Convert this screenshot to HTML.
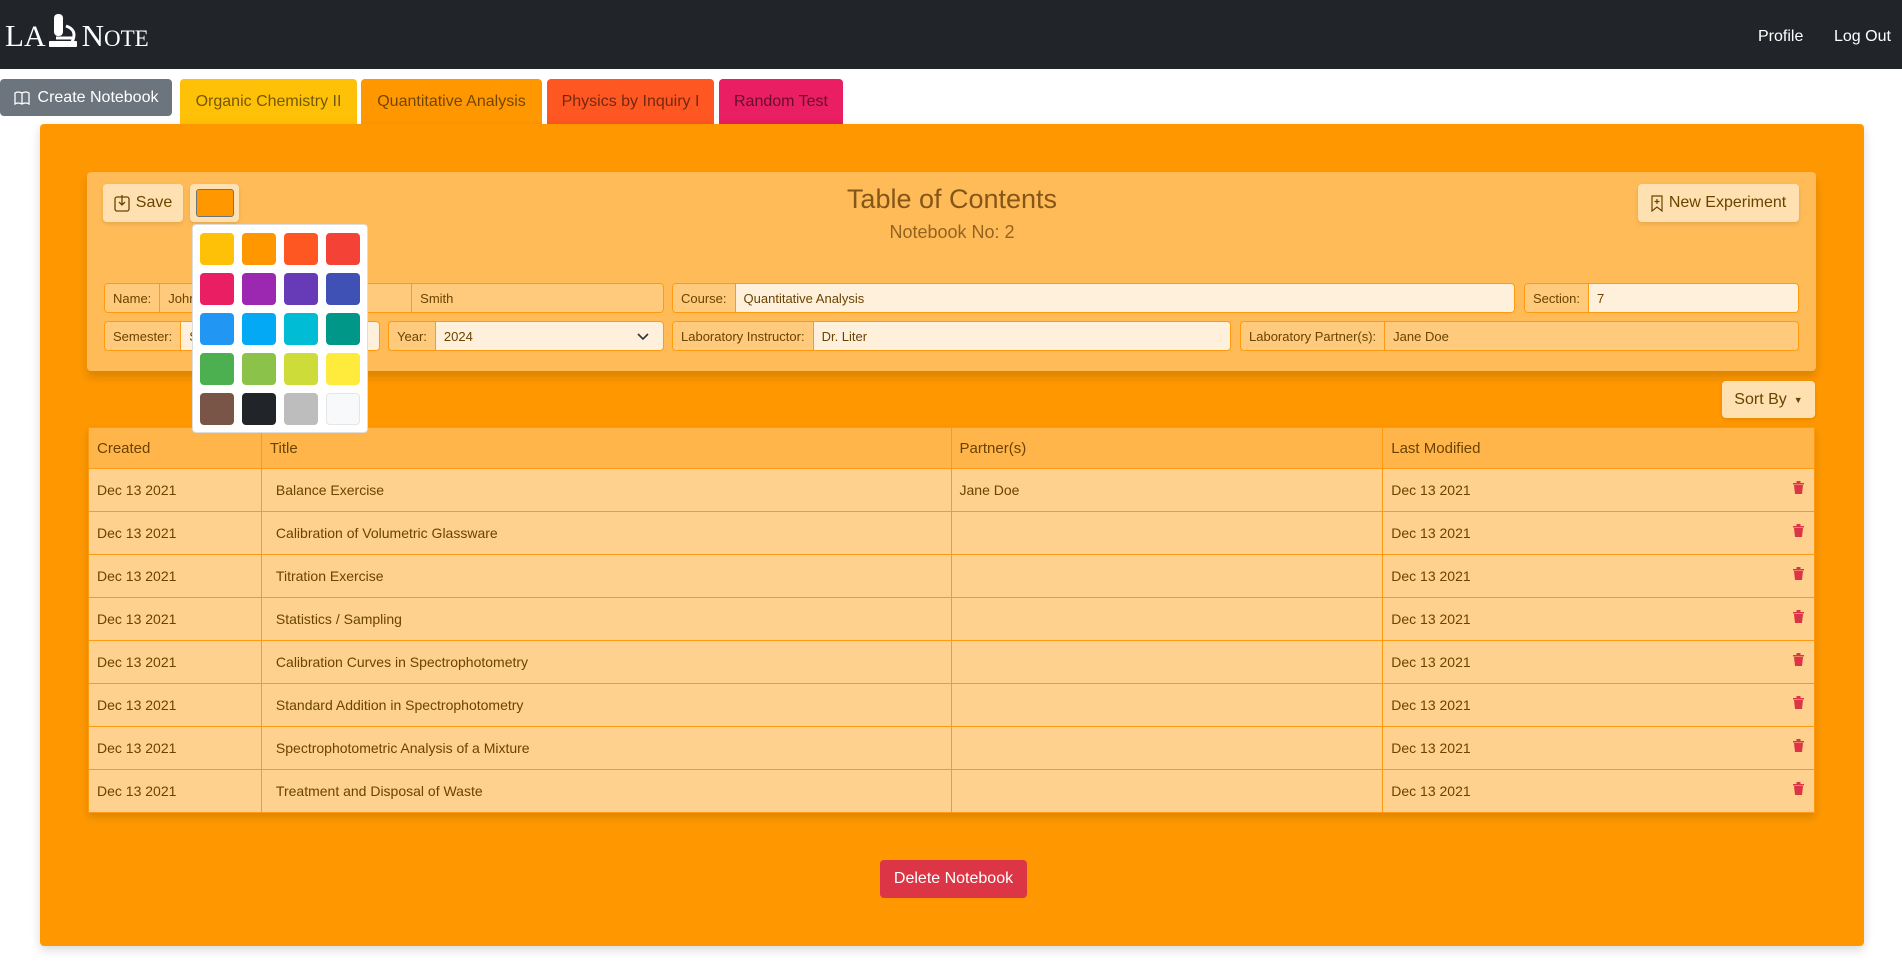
<!DOCTYPE html>
<html><head><meta charset="utf-8">
<style>
*{box-sizing:border-box;margin:0;padding:0}
body{width:1902px;height:965px;overflow:hidden;background:#fff;font-family:"Liberation Sans",sans-serif;position:relative}
.abs{position:absolute}
.nav{left:0;top:0;width:1902px;height:69px;background:#212529}
.logo{left:5px;top:14px;color:#fff;font-family:"Liberation Serif",serif;font-size:31px;white-space:nowrap}
.navlink{color:#fff;font-size:16px;top:28px;font-weight:300}
.btn{display:flex;align-items:center;justify-content:center;border-radius:4px;font-size:16px}
.tab{top:79px;height:45px;border-radius:4px 4px 0 0;font-size:16px;display:flex;align-items:center;justify-content:center;color:rgba(0,0,0,.55)}
.card{left:40px;top:124px;width:1824px;height:822px;background:#ff9800;border-radius:4px;box-shadow:0 4px 10px rgba(0,0,0,.15)}
.panel{left:87px;top:172px;width:1729px;height:199px;background:#ffbb57;border-radius:4px;box-shadow:0 6px 10px rgba(0,0,0,.15)}
.lbtn{background:#ffe0b0;color:#6b4300;box-shadow:0 2px 4px rgba(0,0,0,.1)}
.grp{display:flex;height:30px;border:1px solid #ff9a10;border-radius:4px;overflow:hidden;font-size:13px;color:#6b4300}
.grp .l{background:#ffca7c;padding:0 8px;display:flex;align-items:center;border-right:1px solid #ff9a10;white-space:nowrap}
.grp .i{flex:1;display:flex;align-items:center;padding:0 8px;background:#fff0dc;border-right:1px solid #ff9a10;position:relative}
.grp .i:last-child{border-right:none}
.grp .i.d{background:#ffca7c}
.drop{left:192px;top:224px;width:176px;height:209px;background:#fff;border:1px solid #ddd;border-radius:4px;z-index:10}
.sw{position:absolute;width:34px;height:32px;border-radius:4px}
table{border-collapse:collapse;font-size:14px;color:#6b4300}
.tbl{left:88px;top:427px;width:1727px;box-shadow:0 4px 8px rgba(0,0,0,.15)}
th{background:#ffb54a;font-weight:normal;text-align:left;height:41px;padding:0 8px;border:1px solid #ff9a10;font-size:15px}
td{background:#ffd18e;height:43px;padding:0 8px;border:1px solid #ff9a10;position:relative}
td.t{padding-left:14px}
.trash{position:absolute;right:10px;top:12px}
</style></head><body>
<div class="abs nav"></div>
<div class="abs logo">L<span style="font-size:30px">A</span><svg width="36" height="36" viewBox="0 0 36 36" style="vertical-align:-4px"><rect x="8" y="0" width="9" height="22" rx="4" fill="#fff"/><path d="M10 24 H28 M20 12 Q32 16 26 28" stroke="#fff" stroke-width="3" fill="none"/><rect x="3" y="27" width="28" height="6" rx="1" fill="#fff"/></svg><span>N</span><span style="font-size:23px">OTE</span></div>
<div class="abs navlink" style="left:1758px">Profile</div>
<div class="abs navlink" style="left:1834px">Log Out</div>

<div class="abs btn" style="left:0;top:79px;width:172px;height:37px;background:#6c757d;color:#fff">
<svg width="16" height="14" viewBox="0 0 16 14" style="margin-right:8px"><path d="M1 2 Q4 0 8 2 Q12 0 15 2 V13 Q12 11 8 13 Q4 11 1 13Z M8 2V13" stroke="#fff" stroke-width="1.3" fill="none"/></svg>Create Notebook</div>
<div class="abs tab" style="left:180px;width:177px;background:#ffc107">Organic Chemistry II</div>
<div class="abs tab" style="left:361px;width:181px;background:#ff9800">Quantitative Analysis</div>
<div class="abs tab" style="left:547px;width:167px;background:#ff5722">Physics by Inquiry I</div>
<div class="abs tab" style="left:719px;width:124px;background:#e91e63">Random Test</div>

<div class="abs card"></div>
<div class="abs panel"></div>
<div class="abs btn lbtn" style="left:103px;top:184px;width:80px;height:38px;font-size:16px">
<svg width="16" height="18" viewBox="0 0 16 18" style="margin-right:6px"><rect x="1" y="3" width="14" height="14" rx="2" stroke="#6b4300" stroke-width="1.3" fill="none"/><path d="M8 1V11 M5 8L8 11L11 8" stroke="#6b4300" stroke-width="1.3" fill="none"/></svg>Save</div>
<div class="abs btn lbtn" style="left:190px;top:184px;width:49px;height:38px"><div style="width:38px;height:28px;background:#ff9800;border:1px solid #6c757d;border-radius:3px"></div></div>
<div class="abs" style="left:0;width:1902px;top:184px;text-align:center;padding-left:2px;font-size:27px;color:#855618">Table of Contents</div>
<div class="abs" style="left:0;width:1902px;top:222px;text-align:center;padding-left:2px;font-size:18px;color:#936420">Notebook No: 2</div>
<div class="abs btn lbtn" style="left:1638px;top:184px;width:161px;height:38px">
<svg width="12" height="17" viewBox="0 0 12 17" style="margin-right:6px"><path d="M1 1H11V16L6 12L1 16Z M6 4V9 M3.5 6.5H8.5" stroke="#6b4300" stroke-width="1.2" fill="none"/></svg>New Experiment</div>

<div class="abs grp" style="left:104px;top:283px;width:560px"><div class="l">Name:</div><div class="i d">John</div><div class="i d">Smith</div></div>
<div class="abs grp" style="left:672px;top:283px;width:843px"><div class="l">Course:</div><div class="i">Quantitative Analysis</div></div>
<div class="abs grp" style="left:1524px;top:283px;width:275px"><div class="l">Section:</div><div class="i">7</div></div>
<div class="abs grp" style="left:104px;top:321px;width:276px"><div class="l">Semester:</div><div class="i">Spring</div></div>
<div class="abs grp" style="left:388px;top:321px;width:276px"><div class="l">Year:</div><div class="i">2024<svg width="12" height="8" viewBox="0 0 12 8" style="position:absolute;right:14px;top:11px"><path d="M1 1L6 6L11 1" stroke="#333" stroke-width="1.6" fill="none"/></svg></div></div>
<div class="abs grp" style="left:672px;top:321px;width:559px"><div class="l">Laboratory Instructor:</div><div class="i">Dr. Liter</div></div>
<div class="abs grp" style="left:1240px;top:321px;width:559px"><div class="l">Laboratory Partner(s):</div><div class="i d">Jane Doe</div></div>

<div class="abs drop">
<div class="sw" style="left:7px;top:8px;background:#ffc107"></div><div class="sw" style="left:49px;top:8px;background:#ff9800"></div><div class="sw" style="left:91px;top:8px;background:#ff5722"></div><div class="sw" style="left:133px;top:8px;background:#f44336"></div>
<div class="sw" style="left:7px;top:48px;background:#e91e63"></div><div class="sw" style="left:49px;top:48px;background:#9c27b0"></div><div class="sw" style="left:91px;top:48px;background:#673ab7"></div><div class="sw" style="left:133px;top:48px;background:#3f51b5"></div>
<div class="sw" style="left:7px;top:88px;background:#2196f3"></div><div class="sw" style="left:49px;top:88px;background:#03a9f4"></div><div class="sw" style="left:91px;top:88px;background:#00bcd4"></div><div class="sw" style="left:133px;top:88px;background:#009688"></div>
<div class="sw" style="left:7px;top:128px;background:#4caf50"></div><div class="sw" style="left:49px;top:128px;background:#8bc34a"></div><div class="sw" style="left:91px;top:128px;background:#cddc39"></div><div class="sw" style="left:133px;top:128px;background:#ffeb3b"></div>
<div class="sw" style="left:7px;top:168px;background:#795548"></div><div class="sw" style="left:49px;top:168px;background:#212529"></div><div class="sw" style="left:91px;top:168px;background:#bdbdbd"></div><div class="sw" style="left:133px;top:168px;background:#f8f9fa;border:1px solid #e5e5e5"></div>
</div>

<div class="abs btn lbtn" style="left:1722px;top:381px;width:93px;height:37px">Sort By<span style="font-size:9px;margin-left:7px">▼</span></div>

<table class="abs tbl">
<colgroup><col style="width:173px"><col style="width:690px"><col style="width:432px"><col style="width:432px"></colgroup>
<tr><th>Created</th><th>Title</th><th>Partner(s)</th><th>Last Modified</th></tr>
<tr><td>Dec 13 2021</td><td class="t">Balance Exercise</td><td>Jane Doe</td><td>Dec 13 2021<svg class="trash" width="11" height="13" viewBox="0 0 11 13"><path d="M0 2H11V3.5H0Z M3.5 0H7.5V2H3.5Z M1 4H10L9 13H2Z" fill="#dc3545"/></svg></td></tr>
<tr><td>Dec 13 2021</td><td class="t">Calibration of Volumetric Glassware</td><td></td><td>Dec 13 2021<svg class="trash" width="11" height="13" viewBox="0 0 11 13"><path d="M0 2H11V3.5H0Z M3.5 0H7.5V2H3.5Z M1 4H10L9 13H2Z" fill="#dc3545"/></svg></td></tr>
<tr><td>Dec 13 2021</td><td class="t">Titration Exercise</td><td></td><td>Dec 13 2021<svg class="trash" width="11" height="13" viewBox="0 0 11 13"><path d="M0 2H11V3.5H0Z M3.5 0H7.5V2H3.5Z M1 4H10L9 13H2Z" fill="#dc3545"/></svg></td></tr>
<tr><td>Dec 13 2021</td><td class="t">Statistics / Sampling</td><td></td><td>Dec 13 2021<svg class="trash" width="11" height="13" viewBox="0 0 11 13"><path d="M0 2H11V3.5H0Z M3.5 0H7.5V2H3.5Z M1 4H10L9 13H2Z" fill="#dc3545"/></svg></td></tr>
<tr><td>Dec 13 2021</td><td class="t">Calibration Curves in Spectrophotometry</td><td></td><td>Dec 13 2021<svg class="trash" width="11" height="13" viewBox="0 0 11 13"><path d="M0 2H11V3.5H0Z M3.5 0H7.5V2H3.5Z M1 4H10L9 13H2Z" fill="#dc3545"/></svg></td></tr>
<tr><td>Dec 13 2021</td><td class="t">Standard Addition in Spectrophotometry</td><td></td><td>Dec 13 2021<svg class="trash" width="11" height="13" viewBox="0 0 11 13"><path d="M0 2H11V3.5H0Z M3.5 0H7.5V2H3.5Z M1 4H10L9 13H2Z" fill="#dc3545"/></svg></td></tr>
<tr><td>Dec 13 2021</td><td class="t">Spectrophotometric Analysis of a Mixture</td><td></td><td>Dec 13 2021<svg class="trash" width="11" height="13" viewBox="0 0 11 13"><path d="M0 2H11V3.5H0Z M3.5 0H7.5V2H3.5Z M1 4H10L9 13H2Z" fill="#dc3545"/></svg></td></tr>
<tr><td>Dec 13 2021</td><td class="t">Treatment and Disposal of Waste</td><td></td><td>Dec 13 2021<svg class="trash" width="11" height="13" viewBox="0 0 11 13"><path d="M0 2H11V3.5H0Z M3.5 0H7.5V2H3.5Z M1 4H10L9 13H2Z" fill="#dc3545"/></svg></td></tr>
</table>

<div class="abs btn" style="left:880px;top:860px;width:147px;height:38px;background:#dc3545;color:#fff">Delete Notebook</div>
</body></html>
